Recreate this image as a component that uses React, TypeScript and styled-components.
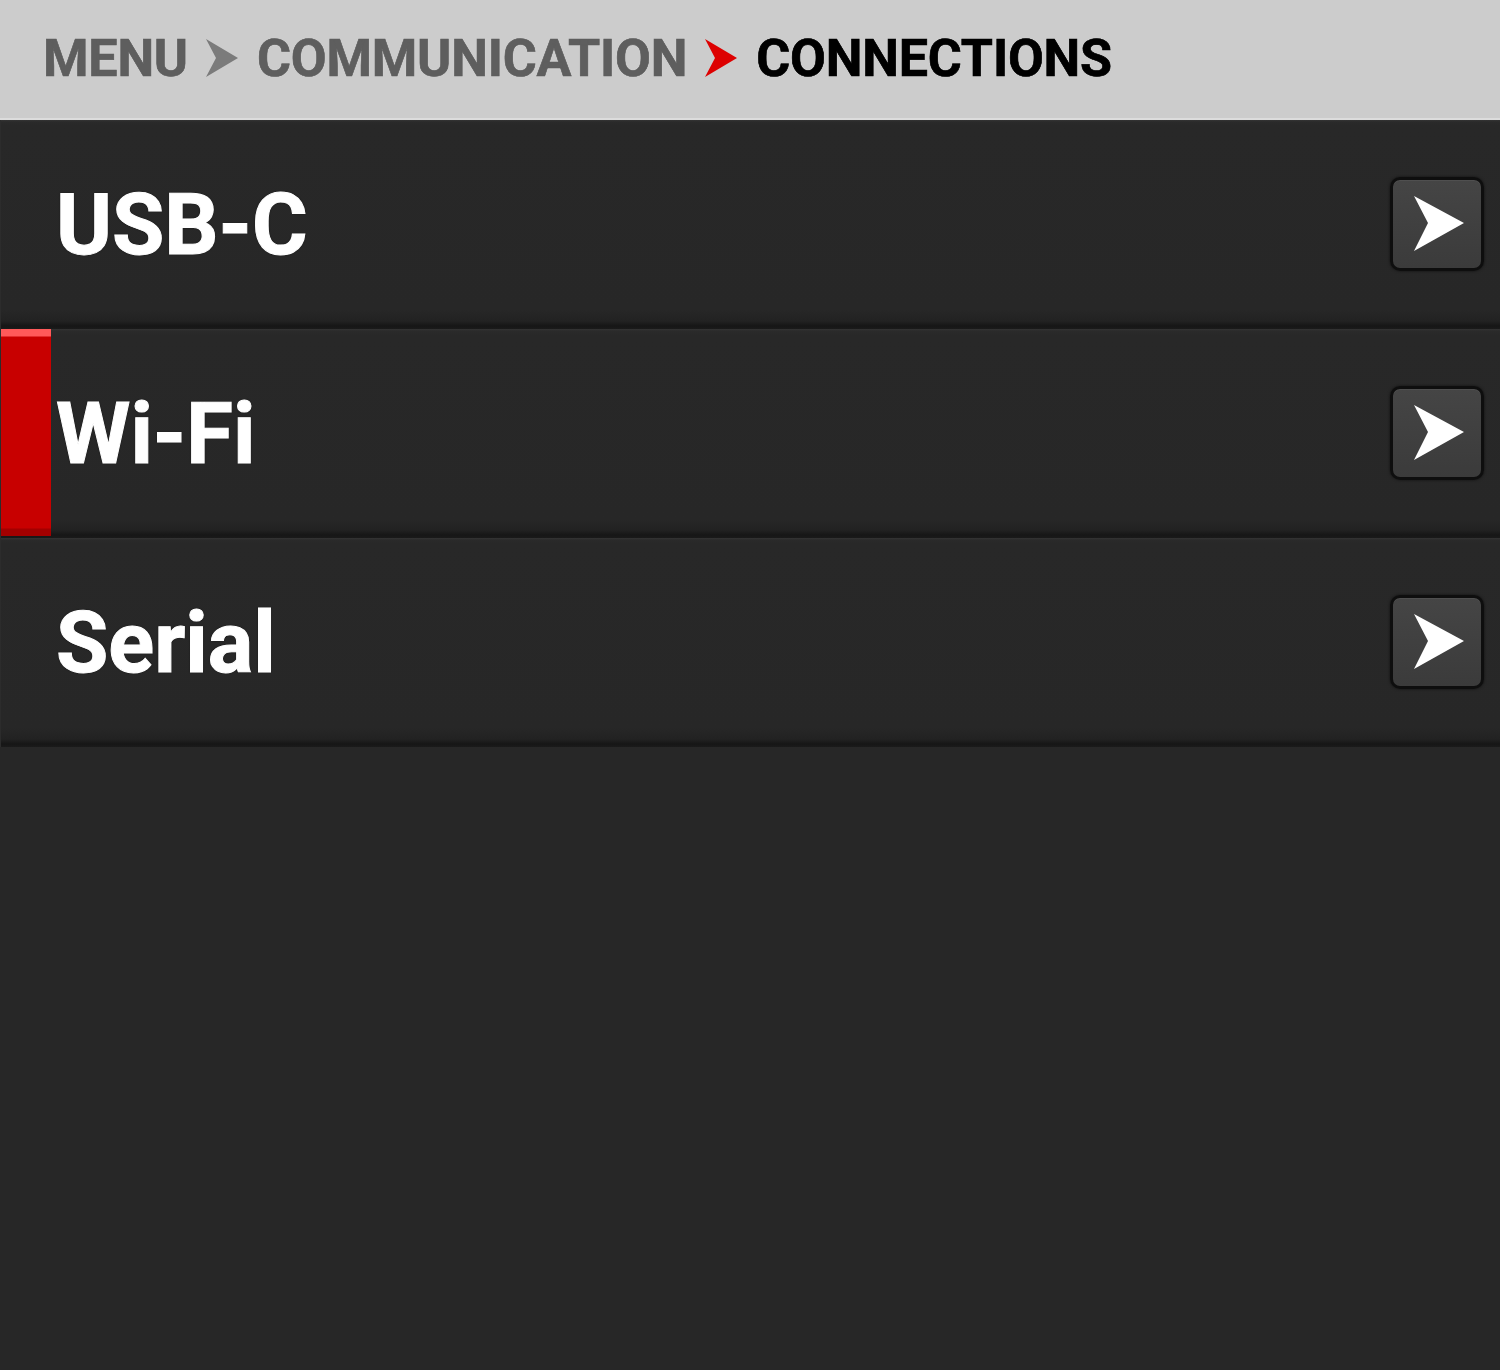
import React from "react";
import styled, { createGlobalStyle } from "styled-components";

const Global = createGlobalStyle`
  html, body {
    margin: 0;
    padding: 0;
    background: #272727;
    font-family: Roboto, "Liberation Sans", sans-serif;
  }
  #root { min-height: 1370px; background: #272727; }
`;

const Page = styled.div`
  display: flex;
  flex-direction: column;
  min-height: 1370px;
  background: #272727;
`;

const Header = styled.header`
  display: flex;
  align-items: center;
  height: 118px;
  padding-left: 43px;
  background: #cccccc;
  border-bottom: 2px solid #dcdcdc;
  box-sizing: content-box;
  gap: 18px;
`;

const Crumb = styled.span<{ $current?: boolean }>`
  font-family: Roboto, "Liberation Sans", sans-serif;
  font-weight: 700;
  font-size: 52px;
  line-height: 1;
  letter-spacing: -0.2px;
  color: ${(p) => (p.$current ? "#000000" : "#5e5e5e")};
  text-shadow: 0 0 1px rgba(255, 255, 255, 0.6), 0 0 0.6px currentColor;
  -webkit-text-stroke: 0.6px currentColor;
  margin-top: 0px;
`;

const CrumbArrow = ({ color }: { color: string }) => (
  <svg width="33" height="38" viewBox="0 0 33 38" style={{ marginTop: -2 }}>
    <polygon points="0,0 32,19 0,38 10,19" fill={color} />
  </svg>
);

const List = styled.div`
  display: flex;
  flex-direction: column;
`;

const Row = styled.div`
  display: flex;
  align-items: stretch;
  height: 209px;
  box-sizing: border-box;
  border-left: 1px solid #2c2c2c;
  background: linear-gradient(
    to bottom,
    #343434 0px,
    #2a2a2a 2px,
    #282828 6px,
    #272727 190px,
    #222222 201px,
    #161616 206px,
    #1a1a1a 209px
  );
`;

const Indicator = styled.div<{ $active?: boolean }>`
  width: 50px;
  flex: none;
  background: ${(p) =>
    p.$active
      ? "linear-gradient(to bottom, #ff5a5a 0px, #ff5a5a 7px, #c80000 8px, #c80000 199px, #a30000 200px, #a30000 207px)"
      : "transparent"};
  margin-bottom: 2px;
`;

const Label = styled.div`
  flex: 1;
  display: flex;
  align-items: center;
  padding-left: 5px;
  padding-top: 2px;
  font-family: Roboto, "Liberation Sans", sans-serif;
  font-weight: 700;
  font-size: 85px;
  line-height: 1;
  color: #ffffff;
  -webkit-text-stroke: 1px #ffffff;
  text-shadow: 0 0 2px rgba(0, 0, 0, 0.7);
`;

const GoButton = styled.button`
  align-self: center;
  margin-right: 16px;
  margin-top: -2px;
  width: 94px;
  height: 94px;
  padding: 0;
  box-sizing: border-box;
  border: 3px solid #0e0e0e;
  border-radius: 10px;
  background: linear-gradient(to bottom, #454545, #3b3b3b);
  box-shadow: 0 0 3px rgba(0, 0, 0, 0.6), inset 0 1px 0 rgba(255, 255, 255, 0.06);
  display: flex;
  align-items: center;
  justify-content: center;
  cursor: pointer;
`;

const ArrowIcon = () => (
  <svg width="88" height="88" viewBox="0 0 88 88">
    <polygon points="21,16 71,43 21,71 35,43" fill="#ffffff" />
  </svg>
);

const items = [
  { label: "USB-C", active: false },
  { label: "Wi-Fi", active: true },
  { label: "Serial", active: false },
];

export default function App() {
  return (
    <Page>
      <Global />
      <Header>
        <Crumb>MENU</Crumb>
        <CrumbArrow color="#7b7b7b" />
        <Crumb>COMMUNICATION</Crumb>
        <CrumbArrow color="#dd0000" />
        <Crumb $current>CONNECTIONS</Crumb>
      </Header>
      <List>
        {items.map((it) => (
          <Row key={it.label}>
            <Indicator $active={it.active} />
            <Label>{it.label}</Label>
            <GoButton aria-label={`Open ${it.label}`}>
              <ArrowIcon />
            </GoButton>
          </Row>
        ))}
      </List>
    </Page>
  );
}
